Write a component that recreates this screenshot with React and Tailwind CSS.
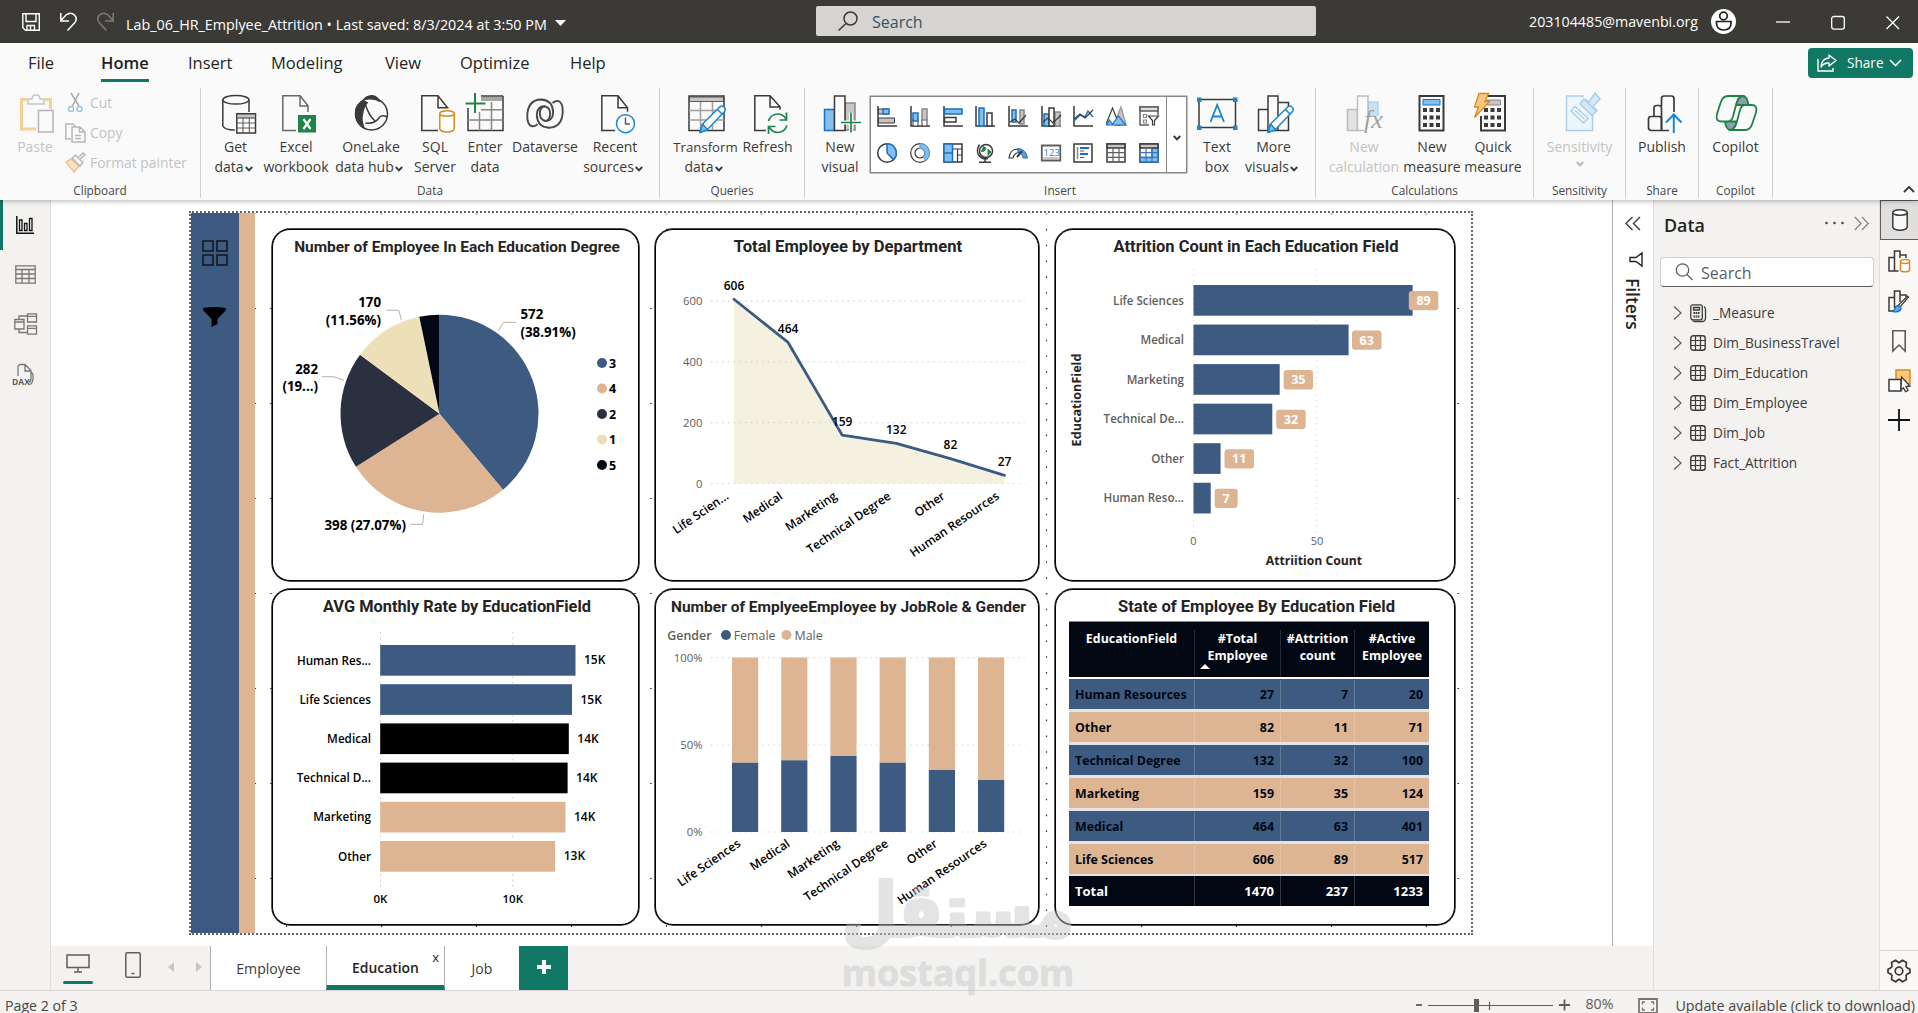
import { Fragment } from 'react'

const BLUE = '#3d5a80'
const TAN = '#deb592'
const INK = '#010813'

const toneFill = { blue: 'bg-[#3d5a80]', tan: 'bg-[#deb592]' }

// ---------- shared bits ----------

function Svg({ w = 40, h = 40, className = '', children }) {
  return (
    <svg
      width={w}
      height={h}
      viewBox={`0 0 ${w} ${h}`}
      fill="none"
      stroke="#3b3a39"
      strokeWidth="1.5"
      className={`shrink-0 overflow-visible ${className}`}
    >
      {children}
    </svg>
  )
}

function Caret({ color = '#3b3a39' }) {
  return (
    <Svg w={8} h={6} className="ml-[1px] mt-[4px]">
      <path d="M.8 1 4 4.4 7.2 1" stroke={color} strokeWidth="1.9" />
    </Svg>
  )
}

// page with a folded corner, used by several ribbon icons
function Doc({ color = '#3b3a39', d = 'M20 36.5H6.8V1.8H24l8 10V18M24 2v10h8' }) {
  return <path d={d} stroke={color} />
}

function Pencil() {
  return (
    <g stroke="#1b86ce" strokeLinejoin="round">
      <path d="M14 38.5 16.5 30 34 12.8q2-1.6 4.2.4 2 2.2.3 4.4L21.5 35.6Z" fill="#fff" />
      <path d="M14 38.5 16.5 30l5 5.6Z" fill="#83bfec" />
      <path d="m31.5 15.5 5 5" />
    </g>
  )
}

const swirl = 'M12.5 30Q10 33 6.500 32 2 30.500 2.300 21 3 6 16 5.500 27.500 6 28.200 18 28 27 20.500 27 15 26 14.800 19.500 15 12.500 20 12.200'

// ---------- ribbon icons ----------

const icons = {
  paste: (
    <g transform="translate(3 0)">
      <path d="M9 5.5H3.5V35H18M27 5.5h5.500V15" stroke="#f3cf9a" strokeWidth="3" />
      <path d="M10 10V5h4q0-4 4-4t4 4h4v5Z" stroke="#c4c4c4" fill="#fafafa" />
      <path d="M20.500 16.500h14.500V38h-14.500Z" stroke="#b5b5b5" fill="#fafafa" />
    </g>
  ),
  getData: (
    <>
      <path d="M6.800 5.800V32q2 4 12 4M33 5.800V18" />
      <ellipse cx="19.900" cy="5.800" rx="13.100" ry="4.300" />
      <path d="M20.800 19.800h18.700V39H20.800Z" fill="#fff" />
      <path d="M20.800 20h18.700v4H20.800Z" fill="#c8c6c4" strokeWidth="1" />
      <path d="M21 29h18M21 34h18M27 24v15M33.300 24v15" strokeWidth="1.100" stroke="#605e5c" />
    </>
  ),
  excel: (
    <>
      <Doc color="#6a6866" />
      <path d="M22 21h18v17.500H22Z" fill="#1e8449" stroke="none" />
      <path d="m27.500 25 7 10M34.500 25l-7 10" stroke="#fff" strokeWidth="2.200" />
    </>
  ),
  oneLake: (
    <>
      <circle cx="20.500" cy="20" r="16" />
      <path d="M12.500 6Q2 11 4.300 23q2 8.500 10 12.500-4-9-2-16 1-7 5-11Z" fill="#3b3a39" stroke="none" />
      <path d="M11 7q3.500-6.500 10.500-6 6.500 1 8 7.500Q22 3.500 11 7Z" fill="#3b3a39" stroke="none" />
      <path d="M14 9q3 11.500 10 18M14.500 29q9 1 13-4.500 3-4.500 8.500-1.500" />
    </>
  ),
  sql: (
    <>
      <Doc d="M23 36.500H6.800V1.800H23l9.500 12H23V2" />
      <path d="M24.800 19.500V35q1 3 7.200 3t7.200-3V19.500" fill="#fff" stroke="#d68b1d" />
      <ellipse cx="32" cy="19.500" rx="7.200" ry="2.800" fill="#fff" stroke="#d68b1d" />
    </>
  ),
  enterData: (
    <>
      <path d="M38 2v34.500H3V14" />
      <path d="M16 3h21v4H16Z" fill="#a8a6a4" stroke="none" />
      <path d="M16 2h22" />
      <path d="M16 15.800h22M3 26h35M14.500 18v18.500M26.500 8v28.500" stroke="#8a8886" />
      <path d="M10-1v20M.5 9.500h20" stroke="#1e8449" strokeWidth="2" />
    </>
  ),
  dataverse: (
    <g strokeWidth="1.900" stroke="#4a4846">
      <path d={swirl} />
      <path d={swirl} transform="rotate(180 20 19.600)" />
    </g>
  ),
  recent: (
    <>
      <Doc d="M20 36.500H6.800V1.800H23l9.500 12v4M23 2v11.800h9.500" />
      <circle cx="30.500" cy="29.700" r="9" fill="#fff" stroke="#1b86ce" />
      <path d="M30.500 23.500v6.500h4.500" stroke="#605e5c" />
    </>
  ),
  transform: (
    <>
      <path d="M3 2h35v34.500H3Z" />
      <path d="M3.500 3h34v4.500h-34Z" fill="#c8c6c4" strokeWidth=".8" />
      <path d="M3 16.500h35M3 26h35M14.500 8v28M26.500 8v28" stroke="#a19f9d" />
      <Pencil />
    </>
  ),
  refresh: (
    <>
      <Doc d="M18 36.500H6.800V1.800H22l10 11v3M22 2v11h10" />
      <g stroke="#1e8449" strokeWidth="1.700">
        <path d="M20.500 27q2.500-7 9.500-7 5 0 8 5M38.500 18.500V26h-7M39 31.500q-2.500 7-9.500 7-5 0-8-5M20.500 40v-7.500h7" />
      </g>
    </>
  ),
  newVisual: (
    <>
      <path d="M25 9h10v27H25Z" fill="#c8c6c4" stroke="#8a8886" />
      <path d="M4.500 15.500h10v21h-10Z" fill="#83bfec" stroke="#1b6ec2" />
      <path d="M14.500 2H25v34.500H14.500Z" fill="#fff" />
      <path d="M21 28.500h20M31 18.500v20" stroke="#fafafa" strokeWidth="4" />
      <path d="M21 28.500h20M31 18.500v20" stroke="#1e8449" strokeWidth="1.700" />
    </>
  ),
  textBox: (
    <>
      <path d="M2 5.500h36.500V33.500H2Z" />
      <g fill="#1b86ce" stroke="none">
        <path d="M0 3.500h4.500V8H0ZM36 3.500h4.500V8H36ZM0 31.500h4.500V36H0ZM36 31.500h4.500V36H36Z" />
      </g>
      <path d="M13.500 28 20.200 11 27 28M16 22.500h8.500" stroke="#1b86ce" strokeWidth="1.800" />
    </>
  ),
  moreVisuals: (
    <>
      <path d="M4.500 15.500h9.500v21H4.500ZM14 2h10v34.500H14ZM24 8.500h10.500v28H24Z" />
      <Pencil />
    </>
  ),
  newCalc: (
    <>
      <path d="M24 8h10v14H24Z" fill="#c7e2f5" stroke="#add4ef" />
      <path d="M3.500 15.500h10v21h-10Z" fill="#e3e3e3" stroke="#bdbdbd" />
      <path d="M13.500 2H24v34.500H13.500Z" fill="#fafafa" stroke="#bdbdbd" />
      <path d="M20 22h18v16H20Z" fill="#fafafa" stroke="none" />
      <text x="20" y="33.500" fill="#a0a0a0" stroke="none" fontSize="26" fontStyle="italic" fontFamily="Liberation Serif, serif">fx</text>
    </>
  ),
  newMeasure: (
    <>
      <path d="M7.500 2h24v34.500h-24Z" strokeWidth="2" />
      <path d="M11 5.500h17v5.500H11Z" fill="#83bfec" stroke="#1b6ec2" strokeWidth="1" />
      <path d="M11 16h17M11 23.500h17M11 31h17" strokeWidth="4" strokeDasharray="4 2.500" />
    </>
  ),
  quickMeasure: (
    <>
      <path d="M14 2h18v34.500H8V22" strokeWidth="2" />
      <path d="M14 6h13.500v5H14Z" fill="#c8c6c4" stroke="#8a8886" strokeWidth="1" />
      <path d="M11 16h17M11 23.500h17M11 31h17" strokeWidth="4" strokeDasharray="4 2.500" />
      <path d="M6-.5h9.500L12 7.500h4.500L1.500 23.500 5.500 13H1.500Z" fill="#fbc77d" stroke="#d68b1d" strokeWidth="1.300" />
    </>
  ),
  sensitivity: (
    <g stroke="#a9cfea">
      <path d="M24 2H6.500v34.500H32.500V19" fill="#eef6fc" />
      <path d="m11 17 4-4.500 13 11.500-4.500 5Z" fill="#fafafa" />
      <path d="m15 16.500 9.500 8.500" />
      <path d="m20 10 4-5 5 3 6-9 5 6-7 7.500 4 4-5 5Z" fill="#d5e9f7" />
      <path d="m24 5 12 12" />
    </g>
  ),
  publish: (
    <>
      <g strokeWidth="1.700">
        <path d="M19.500 36.500V14q0-2.500-2.500-2.500h-2.500Q12 11.500 12 14v8.500M19.500 12V4.500Q19.500 2 22 2h7.500Q32 2 32 4.500V18" />
        <path d="M6.500 25q0-2.500 2.500-2.500h8q2.500 0 2.500 2.500v11.500h-10q-3 0-3-3ZM19.500 36.500H27" />
      </g>
      <path d="M31.800 39V20.500M24 28.500l7.800-8 7.700 8" stroke="#1b86ce" strokeWidth="2" />
    </>
  ),
  copilot: (
    <g stroke="#1d8348" strokeWidth="1.800" strokeLinejoin="round">
      <path d="M20 11q2-9 7-9 4 0 5.500 9Z" fill="#8f9fa8" />
      <path d="M9 27.500q1 8.500 5.500 8.500 3.500 0 6.500-8.500Z" fill="#8f9fa8" />
      <path d="M27.500 2H12Q6.500 2 4.500 9L1 20q-2 7.500 4.500 7.500H12q3.500 0 5-5L20.500 9q2-7 7-7Z" fill="#fafafa" />
      <path d="M13.500 36H29q5.500 0 7.500-7L40 18.500Q42 11 35.500 11H29q-3.500 0-5 5l-3.500 13q-2 7-7 7Z" fill="#fafafa" />
    </g>
  ),
}

// 20px visuals in the gallery, row by row
const axis = <path d="M1 0v20h19" />
const gallery = [
  <>{axis}<path d="M1.500 3h10v5h-10ZM1.500 12h16v5h-16Z" fill="#c8c6c4" strokeWidth="1" /><path d="M6 3h6v5H6Z" fill="#83bfec" stroke="#1b6ec2" /></>,
  <>{axis}<path d="M3 13h5v7H3ZM12 13h5v7h-5Z" strokeWidth="1" fill="#fff" /><path d="M3 7h5v8H3Z" fill="#83bfec" stroke="#1b6ec2" /><path d="M12 3h5v11h-5Z" fill="#c8c6c4" stroke="#8a8886" /></>,
  <>{axis}<path d="M1.500 3H19v5H1.500Z" fill="#83bfec" stroke="#1b6ec2" /><path d="M1.500 11.500H13v4.500H1.500Z" fill="#fff" /></>,
  <>{axis}<path d="M4 2h5v18H4Z" fill="#83bfec" stroke="#1b6ec2" /><path d="M12 7h5v13h-5Z" fill="#fff" /></>,
  <>{axis}<path d="M4 4h4v12H4Z" fill="#83bfec" stroke="#1b6ec2" /><path d="M12 4h4v14h-4Z" fill="#c8c6c4" stroke="#8a8886" /><path d="m2 16 5-3 4 4 7-8" strokeWidth="1.200" /></>,
  <>{axis}<path d="M3 8h5v12H3Z" fill="#83bfec" stroke="#1b6ec2" /><path d="M14 6h5v14h-5Z" fill="#c8c6c4" stroke="#8a8886" /><path d="M8 2h5v18H8Z" fill="#fff" /><path d="m2 16 5-4 5 5 8-8" strokeWidth="1.200" /></>,
  <>{axis}<path d="m1 15 6-6 5 2 3-6 5 6" stroke="#1b6ec2" /><path d="m1 13 6-5 5 4 8-8" strokeWidth="1.200" /></>,
  <><path d="m8 19 7-18 5 18Z" fill="#c8c6c4" stroke="#a19f9d" /><path d="m.500 17 6-15 7 17Z" fill="#fff" strokeWidth="1.200" /><path d="m.500 19 3-5 3 4 6-8 7 9Z" fill="#83bfec" stroke="#1b6ec2" strokeWidth="1.200" /></>,
  <><path d="M10 19H1V1h18v8" stroke="#605e5c" /><path d="M1 1h18v4H1Z" fill="#e1dfdd" stroke="#605e5c" /><path d="M4.500 8.500h3v3h-3ZM4.500 14h3v3h-3Z" stroke="#8a8886" strokeWidth="1.200" /><path d="M9.500 10h10l-4 4.500V19h-2v-4.500Z" fill="#fff" strokeWidth="1.200" /></>,
  <><circle cx="10" cy="10" r="9.300" fill="#fff" /><path d="M10 .700A9.300 9.300 0 0 1 16.500 16.600L10 10Z" fill="#83bfec" stroke="#1b6ec2" /></>,
  <><circle cx="10" cy="10" r="9.300" strokeWidth="1.200" /><circle cx="10" cy="10" r="5" strokeWidth="1.200" /><path d="M10 .700A9.300 9.300 0 0 1 15.500 17.500L13 14A5 5 0 0 0 10 5Z" fill="#83bfec" stroke="#5a9fd6" strokeWidth="1" /></>,
  <><path d="M1 1h18v18H1Z" /><path d="M1 1h8.500v18H1Z" fill="#83bfec" stroke="#1b6ec2" /><path d="M1 10h8.500" stroke="#1b6ec2" /><path d="M9.500 6H19M14.500 6v13M14.500 12H19" strokeWidth="1.200" /></>,
  <><circle cx="11" cy="8" r="6.500" /><path d="M8 3.500 11 5 9.500 8 6 8.500M13 6l3 3-3 3.500Z" fill="#1e8449" stroke="#1e8449" strokeWidth="1" /><path d="M4.500 1.500Q.500 8 4 12.500T13 15.500M10 16v3M4 19.300h12" /></>,
  <><path d="M1 15Q2 6 10 6l1 3.500Q6 10 5 15Z" fill="#fff" strokeWidth="1.200" /><path d="M10 5.500q8 .5 9.500 9.500H15q-.5-5-5-5.500Z" fill="#5a9fd6" stroke="#1b6ec2" strokeWidth="1" /><path d="m9 14 5-6" strokeWidth="2" /></>,
  <><path d="M.800 2.500h18.500v15H.800Z" stroke="#605e5c" strokeWidth="1.800" /><path d="M2.500 15h15" stroke="#a19f9d" strokeWidth="1.200" /><text x="2.500" y="12.500" fill="#1b86ce" stroke="none" fontSize="9.500" fontFamily="Open Sans, sans-serif">123</text></>,
  <><path d="M1 1h18v18H1Z" /><path d="M4.500 4v12" stroke="#8a8886" /><path d="M7 5h9M7 11h8" stroke="#1b6ec2" strokeWidth="2.200" /><path d="M7 8h4M7 14.500h4" stroke="#605e5c" strokeWidth="1" /></>,
  <><path d="M1 1h18v18H1Z" fill="#fff" /><path d="M1 1h18v4H1Z" fill="#c8c6c4" /><path d="M1 9.700h18M1 14.300h18M7 5v14M13 5v14" strokeWidth="1.200" stroke="#605e5c" /></>,
  <><path d="M1 1h18v18H1Z" fill="#fff" /><path d="M13 5h6v14H1v-4.500h12Z" fill="#83bfec" stroke="#1b6ec2" /><path d="M1 1h18v4H1Z" fill="#c8c6c4" /><path d="M1 9.700h18M1 14.300h18M7 5v14M13 5v14" strokeWidth="1.200" stroke="#3c78b4" /></>,
]

// ---------- title bar ----------

function TitleBar() {
  return (
    <div className="grid h-[43px] shrink-0 grid-cols-[816px_500px_1fr] items-center bg-[#3b3a37] text-white">
      <div className="flex items-center pl-[22px]">
        <Svg w={18} h={18}>
          <g stroke="#fff" strokeWidth="1.400">
            <path d="M.800.800h16.500v16.500H3.500L.800 14.800ZM4 1v7.500h10V1M5 17v-4.500h7.500V17M8.500 13v4" />
          </g>
        </Svg>
        <Svg w={17} h={19} className="ml-[20px]">
          <path d="M.800 1v8H9M1 8.500 6 3q4.500-3.500 8.500 0 3.500 4 0 8L7.500 18.500" stroke="#fff" />
        </Svg>
        <Svg w={17} h={19} className="ml-[20px]">
          <path d="M16.200 1v8H8M16 8.500 11 3Q6.500-.500 2.500 3-1 7 2.500 11L9.500 18.500" stroke="#7d7c7a" />
        </Svg>
        <span className="ml-[12px] mt-[6px] whitespace-pre text-[14.34px] leading-5">
          Lab_06_HR_Emplyee_Attrition • Last saved: 8/3/2024 at 3:50 PM
        </span>
        <Svg w={11} h={6} className="ml-[8px] mt-[2px]">
          <path d="M0 0h11L5.500 6Z" fill="#fff" stroke="none" />
        </Svg>
      </div>
      <div className="mb-px flex h-[30px] items-center rounded-[2px] bg-[#d5d4d2] pl-[22px] text-[16px] text-[#36545c]">
        <Svg w={20} h={20}>
          <circle cx="12.500" cy="7.500" r="6.500" />
          <path d="m8 12.500-7.500 7" />
        </Svg>
        <span className="ml-[14px] mt-[2px]">Search</span>
      </div>
      <div className="flex items-center justify-end pr-[18px]">
        <span className="text-[14.230px]">203104485@mavenbi.org</span>
        <Svg w={26} h={26} className="ml-[13px]">
          <circle cx="12.500" cy="12.500" r="12.500" fill="#fff" stroke="none" />
          <circle cx="12.500" cy="7" r="3.800" stroke="#222" strokeWidth="1.700" />
          <path d="M5.500 12.500h14.500v1.500q0 7-7.250 7t-7.250-7Z" stroke="#222" strokeWidth="1.700" />
        </Svg>
        <Svg w={14} h={14} className="ml-[39px]"><path d="M0 7h14" stroke="#fff" strokeWidth="1.300" /></Svg>
        <Svg w={14} h={14} className="ml-[41px]"><rect x=".700" y="1.500" width="12.600" height="12.600" rx="2" stroke="#fff" strokeWidth="1.300" /></Svg>
        <Svg w={14} h={14} className="ml-[41px]"><path d="m.500 1.500 12.500 12.500M13 1.500.500 14" stroke="#fff" strokeWidth="1.300" /></Svg>
      </div>
    </div>
  )
}

// ---------- ribbon ----------

const menu = [
  ['File', 'ml-[28px] w-[73px]'],
  ['Home', 'w-[87px] font-semibold text-[#201f1e]'],
  ['Insert', 'w-[83px]'],
  ['Modeling', 'w-[114px]'],
  ['View', 'w-[75px]'],
  ['Optimize', 'w-[110px]'],
  ['Help', 'w-[60px]'],
]

function MenuBar() {
  return (
    <div className="flex h-[45px] shrink-0 text-[16.500px] text-[#252423]">
      {menu.map(([label, cls]) => (
        <div key={label} className={`pt-[7px] ${cls}`}>
          <span className="inline-block leading-[25px]">{label}</span>
          {label === 'Home' && <div className="mt-[3px] h-[3px] w-[48px] bg-[#117865]" />}
        </div>
      ))}
      <button className="ml-auto mr-[5px] mt-[5px] flex h-[30px] w-[105px] items-center rounded-[4px] bg-[#117865] pl-[9px] text-[13.600px] text-white">
        <Svg w={20} h={18}>
          <g stroke="#fff" strokeWidth="1.400">
            <path d="M1 5v12h15v-3" />
            <path d="M12 1l7 5.500-7 5.500V9q-5-.5-8 4 .5-8.500 8-9Z" strokeLinejoin="round" />
          </g>
        </Svg>
        <span className="ml-[10px]">Share</span>
        <Svg w={13} h={8} className="ml-[5px]"><path d="m1 1 5.500 5.500L12 1" stroke="#fff" strokeWidth="1.600" /></Svg>
      </button>
    </div>
  )
}

function RibbonButton({ icon, label, sub, caret, width, muted, labelClass = '' }) {
  return (
    <div className={`flex shrink-0 flex-col items-center whitespace-nowrap text-[14px] leading-5 ${width} ${muted ? 'text-[#c3c3c3]' : 'text-[#3b3a39]'}`}>
      <Svg>{icons[icon]}</Svg>
      <span className={`mt-[3px] ${labelClass}`}>{label}</span>
      <span className={`flex items-center ${caret && sub ? 'mr-[4px]' : ''}`}>
        {sub}
        {caret && <Caret color={muted ? '#b5b5b5' : '#3b3a39'} />}
      </span>
    </div>
  )
}

function Group({ title, width, pad = '', children }) {
  return (
    <div className={`flex h-[110px] shrink-0 flex-col border-r border-[#d2d0ce] ${width}`}>
      <div className={`flex h-[97px] pt-[6px] ${pad}`}>{children}</div>
      <div className="text-center text-[11.800px] leading-4 text-[#484644]">{title}</div>
    </div>
  )
}

function Gallery() {
  return (
    <div className="mt-[2px] flex h-[77px] w-[317px] shrink-0 border border-[#8a8886] bg-white shadow-[0_0_0_0.500px_#8a8886]">
      <div className="grid flex-1 grid-cols-9 grid-rows-2 gap-y-[1px] py-[1px] pr-[1px]">
        {gallery.map((g, i) => (
          <div key={i} className="flex items-center justify-center">
            <Svg w={20} h={20}>{g}</Svg>
          </div>
        ))}
      </div>
      <div className="flex w-[20px] items-center justify-center border-l border-[#8a8886] pt-[6px]">
        <Svg w={8} h={6}><path d="M.800 1 4 4.400 7.200 1" strokeWidth="2" /></Svg>
      </div>
    </div>
  )
}

function Ribbon() {
  return (
    <div className="flex h-[112px] shrink-0">
      <Group title="Clipboard" width="w-[201px]" pad="pl-[12px]">
        <RibbonButton icon="paste" label="Paste" width="w-[46px]" muted />
        <div className="flex flex-col pl-[7px] text-[13.900px] text-[#c3c3c3]">
          <div className="flex h-[30px] items-center -mt-[6px]">
            <Svg w={20} h={22}>
              <path d="M6 1l8 13M14 1 7.500 14" stroke="#a8a8a8" />
              <circle cx="6" cy="17" r="2.500" stroke="#9dc3e2" />
              <circle cx="14.500" cy="17" r="2.500" stroke="#9dc3e2" />
            </Svg>
            <span className="ml-[5px]">Cut</span>
          </div>
          <div className="flex h-[30px] items-center">
            <Svg w={20} h={22}>
              <g stroke="#b8b8b8">
                <path d="M6 17H.800V2H8l3 3" />
                <path d="M7 5h8l5 5v10H7ZM14.500 5v5H20M10 13.500h6M10 16.500h6" fill="#fafafa" />
              </g>
            </Svg>
            <span className="ml-[5px]">Copy</span>
          </div>
          <div className="flex h-[30px] items-center">
            <Svg w={20} h={20}>
              <path d="m1 9 5-3 8 7-5 6Z" fill="#fae3c4" stroke="#efc48c" />
              <path d="m7 5 8 8 3-4-3.500-2.500L20 2l-2-2-5 5-2.500-3Z" fill="#fafafa" stroke="#b8b8b8" />
            </Svg>
            <span className="ml-[5px] whitespace-nowrap">Format painter</span>
          </div>
        </div>
      </Group>
      <Group title="Data" width="w-[459px]" pad="pl-[6px]">
        <RibbonButton icon="getData" label="Get" sub="data" caret width="w-[57px]" />
        <RibbonButton icon="excel" label="Excel" sub="workbook" width="w-[64px]" />
        <RibbonButton icon="oneLake" label="OneLake" sub="data hub" caret width="w-[86px]" />
        <RibbonButton icon="sql" label="SQL" sub="Server" width="w-[42px]" />
        <RibbonButton icon="enterData" label="Enter" sub="data" width="w-[58px]" />
        <RibbonButton icon="dataverse" label="Dataverse" width="w-[62px]" />
        <RibbonButton icon="recent" label="Recent" sub="sources" caret width="w-[78px]" />
      </Group>
      <Group title="Queries" width="w-[145px]" pad="pl-[8px]">
        <RibbonButton icon="transform" label="Transform" sub="data" caret width="w-[75px]" labelClass="text-[13.200px]" />
        <RibbonButton icon="refresh" label="Refresh" width="w-[49px]" />
      </Group>
      <Group title="Insert" width="w-[511px]" pad="pl-[5px]">
        <RibbonButton icon="newVisual" label="New" sub="visual" width="w-[60px]" />
        <Gallery />
        <RibbonButton icon="textBox" label="Text" sub="box" width="w-[60px]" />
        <RibbonButton icon="moreVisuals" label="More" sub="visuals" caret width="w-[53px]" />
      </Group>
      <Group title="Calculations" width="w-[218px]" pad="pl-[9px]">
        <RibbonButton icon="newCalc" label="New" sub="calculation" width="w-[78px]" muted />
        <RibbonButton icon="newMeasure" label="New" sub="measure" width="w-[58px]" />
        <RibbonButton icon="quickMeasure" label="Quick" sub="measure" width="w-[64px]" />
      </Group>
      <Group title="Sensitivity" width="w-[92px]" pad="justify-center">
        <RibbonButton icon="sensitivity" label="Sensitivity" caret width="w-[70px]" muted />
      </Group>
      <Group title="Share" width="w-[73px]" pad="justify-center">
        <RibbonButton icon="publish" label="Publish" width="w-[60px]" />
      </Group>
      <Group title="Copilot" width="w-[74px]" pad="justify-center">
        <RibbonButton icon="copilot" label="Copilot" width="w-[60px]" />
      </Group>
      <Svg w={12} h={7} className="ml-auto mr-[3px] mt-[98px]"><path d="m1 6 5-5 5 5" strokeWidth="1.900" /></Svg>
    </div>
  )
}

// ---------- left view rail ----------

function ViewRail() {
  return (
    <div className="flex w-[51px] shrink-0 flex-col border-r border-[#e1dfdd] bg-[#f3f2f1]">
      <div className="flex h-[50px] items-center border-l-[3px] border-[#117865] pl-[13px]">
        <Svg w={18} h={18}>
          <path d="M.800 0v17.200H18" stroke="#111" />
          <path d="M3.500 4h2.500v10.500H3.500ZM8.500 7.500H11v7H8.500ZM13.500 2.500H16v12h-2.500Z" stroke="#111" strokeWidth="1.300" />
        </Svg>
      </div>
      <div className="flex h-[48px] items-center pl-[15px]">
        <Svg w={21} h={19}>
          <g stroke="#797775"><path d="M.800.800h19.400v17.400H.800ZM.800 4.500h19.400M.800 9h19.400M.800 13.500h19.400M7 4.500v13.500M14 4.500v13.500" strokeWidth="1.300" /></g>
        </Svg>
      </div>
      <div className="flex h-[52px] items-center pl-[14px]">
        <Svg w={23} h={22}>
          <g stroke="#797775" strokeWidth="1.300">
            <path d="M.800 6.500H10v9.500H.800ZM.800 9H10M13.500.800h9V9h-9ZM13.500 3.300h9M13.500 12.800h9v8.400h-9ZM13.500 15.300h9M5 6V3h8.500M5 16v3.500h8.500" />
          </g>
        </Svg>
      </div>
      <div className="flex h-[50px] items-center pl-[12px]">
        <Svg w={24} h={22}>
          <g stroke="#797775" strokeWidth="1.300">
            <path d="M6 12V3q0-2.500 2.500-2.500H13l6 6V15q0 3-2.500 3M13 .500V7h6M19 8q2.500 1.500 2 6 0 5-3 6.500" />
          </g>
          <text x="0" y="21" fill="#605e5c" stroke="none" fontSize="8.500" fontWeight="700" fontFamily="Open Sans, sans-serif">DAX</text>
        </Svg>
      </div>
    </div>
  )
}

// ---------- report visuals ----------

function Card({ title, titleClass, children }) {
  return (
    <section className="flex flex-col overflow-hidden rounded-[18px] border border-black bg-white shadow-[0_0_0_0.700px_#111]">
      <h2 className={`h-[32px] shrink-0 whitespace-nowrap pt-[5px] text-center font-['Roboto'] font-bold leading-6 text-[#252423] ${titleClass}`}>
        {title}
      </h2>
      {children}
    </section>
  )
}

// chart areas share the report's own coordinate system
function Plot({ x, y, w, h, children }) {
  return (
    <svg width={w} height={h} viewBox={`${x} ${y} ${w} ${h}`} className="shrink-0" fontFamily="Open Sans, sans-serif">
      {children}
    </svg>
  )
}

const slices = [
  { key: '3', value: 572, color: BLUE },
  { key: '4', value: 398, color: TAN },
  { key: '2', value: 282, color: '#2a3040' },
  { key: '1', value: 170, color: '#ede0b9' },
  { key: '5', value: 48, color: INK },
]

function slicePath(from, to) {
  const cx = 439.5
  const cy = 413.7
  const r = 99
  const at = (f) => `${(cx + r * Math.sin(f * 2 * Math.PI)).toFixed(2)} ${(cy - r * Math.cos(f * 2 * Math.PI)).toFixed(2)}`
  return `M${cx} ${cy}L${at(from)}A${r} ${r} 0 0 1 ${at(to)}Z`
}

function DegreePie() {
  const total = slices.reduce((s, d) => s + d.value, 0)
  let acc = 0
  return (
    <Plot x={273} y={262} w={364} h={316}>
      {slices.map((s, i) => {
        const from = acc / total
        acc += s.value
        return (
          <Fragment key={s.key}>
            <path d={slicePath(from, acc / total)} fill={s.color} />
            <circle cx="602" cy={363 + i * 25.500} r="5" fill={s.color} />
            <text x="609" y={367.800 + i * 25.500} fontSize="12.500" fontWeight="700">{s.key}</text>
          </Fragment>
        )
      })}
      <g fill="none" stroke="#b3b0ad">
        <path d="M386.400 310.300h12.400l2.500 9.400M498.300 330.700l5.400-8.400H516M322 376.700h11.700l10.300 3.600M410.400 524.300h12.100l1.200-10" />
      </g>
      <g fontSize="13.300" fontWeight="700">
        <text x="381" y="306.700" textAnchor="end">170</text>
        <text x="381" y="324.500" textAnchor="end">(11.56%)</text>
        <text x="520.500" y="318.700">572</text>
        <text x="520.500" y="337">(38.91%)</text>
        <text x="318" y="373.700" textAnchor="end">282</text>
        <text x="318" y="391" textAnchor="end">(19...)</text>
        <text x="324.500" y="529.500">398 (27.07%)</text>
      </g>
    </Plot>
  )
}

const departments = [
  ['Life Scien...', 606],
  ['Medical', 464],
  ['Marketing', 159],
  ['Technical Degree', 132],
  ['Other', 82],
  ['Human Resources', 27],
]

function DepartmentArea() {
  const px = (i) => 734 + i * 54.100
  const py = (v) => 483.500 - v * 0.304
  const line = departments.map(([, v], i) => `${px(i)},${py(v)}`).join(' ')
  return (
    <Plot x={656} y={262} w={382} h={316}>
      <polygon points={`734,483.500 ${line} 1004.500,483.500`} fill="#f5f1e1" />
      {[600, 400, 200, 0].map((v) => (
        <Fragment key={v}>
          <path d={`M711 ${py(v)}h314`} stroke="#d2d0ce" strokeWidth="1.200" strokeDasharray="1.200 4.500" />
          <text x="702.500" y={py(v) + 4} textAnchor="end" fontSize="11.300" fill="#605e5c">{v}</text>
        </Fragment>
      ))}
      <polyline points={line} fill="none" stroke={BLUE} strokeWidth="2.800" strokeLinecap="round" strokeLinejoin="round" />
      {departments.map(([name, v], i) => (
        <Fragment key={name}>
          <text x={px(i)} y={py(v) - 9.300} textAnchor="middle" fontSize="12" fontWeight="600">{v}</text>
          <text textAnchor="end" fontSize="12" fontWeight="600" transform={`translate(${px(i) - 4.5} 498) rotate(-34.500)`}>{name}</text>
        </Fragment>
      ))}
    </Plot>
  )
}

const attrition = [
  ['Life Sciences', 89, 1408.800],
  ['Medical', 63, 1352],
  ['Marketing', 35, 1283.600],
  ['Technical De...', 32, 1276.200],
  ['Other', 11, 1224.500],
  ['Human Reso...', 7, 1214.700],
]

function AttritionBars() {
  return (
    <Plot x={1056} y={262} w={398} h={316}>
      <path d="M1193.500 269v264M1316.700 269v264" stroke="#d2d0ce" strokeDasharray="1.200 4.500" />
      <text transform="translate(1081 400) rotate(-90)" textAnchor="middle" fontSize="12.600" fontWeight="700" fill="#252423">EducationField</text>
      {attrition.map(([name, v, lx], i) => {
        const y = 285 + i * 39.550
        const lw = v > 9 ? 29.500 : 23
        return (
          <Fragment key={name}>
            <text x="1184" y={y + 19.500} textAnchor="end" fontSize="11.600" fontWeight="600" fill="#605e5c">{name}</text>
            <rect x="1193.500" y={y} width={v * 2.462} height="30.700" fill={BLUE} />
            <rect x={lx} y={y + 6} width={lw} height="19.300" rx="3" fill={TAN} />
            <text x={lx + lw / 2} y={y + 20.200} textAnchor="middle" fontSize="12.500" fontWeight="700" fill="#fff">{v}</text>
          </Fragment>
        )
      })}
      <text x="1193.500" y="545" textAnchor="middle" fontSize="11" fill="#605e5c">0</text>
      <text x="1317" y="545" textAnchor="middle" fontSize="11" fill="#605e5c">50</text>
      <text x="1314" y="565" textAnchor="middle" fontSize="12.200" fontWeight="700" fill="#252423">Attriition Count</text>
    </Plot>
  )
}

const monthly = [
  ['Human Res...', '15K', 195.300, BLUE],
  ['Life Sciences', '15K', 191.800, BLUE],
  ['Medical', '14K', 188.600, '#000'],
  ['Technical D...', '14K', 187.400, '#000'],
  ['Marketing', '14K', 185.300, TAN],
  ['Other', '13K', 175, TAN],
]

function MonthlyBars() {
  return (
    <Plot x={273} y={622} w={364} h={300}>
      <path d="M380.500 632v257M512.800 632v257" stroke="#d2d0ce" strokeDasharray="2 3.500" />
      {monthly.map(([name, label, w, color], i) => {
        const y = 645 + i * 39.200
        return (
          <Fragment key={name}>
            <text x="371" y={y + 19.500} textAnchor="end" fontSize="11.700" fontWeight="600">{name}</text>
            <rect x="380.200" y={y} width={w} height="30.700" fill={color} />
            <text x={380.200 + w + 8.500} y={y + 19.300} fontSize="12" fontWeight="600">{label}</text>
          </Fragment>
        )
      })}
      <text x="380.500" y="902.700" textAnchor="middle" fontSize="11.500" fontWeight="600">0K</text>
      <text x="512.800" y="902.700" textAnchor="middle" fontSize="11.500" fontWeight="600">10K</text>
    </Plot>
  )
}

const genders = [
  ['Life Sciences', 762.700],
  ['Medical', 760.300],
  ['Marketing', 756],
  ['Technical Degree', 762.700],
  ['Other', 770],
  ['Human Resources', 780],
]

function GenderColumns() {
  return (
    <Plot x={656} y={622} w={382} h={300}>
      <g fontSize="12.400" fill="#605e5c">
        <text x="667.300" y="640" fontWeight="600">Gender</text>
        <circle cx="726" cy="635" r="5" fill={BLUE} />
        <text x="733.700" y="640">Female</text>
        <circle cx="786.500" cy="635" r="5" fill={TAN} />
        <text x="794.500" y="640">Male</text>
      </g>
      {[['100%', 657.700], ['50%', 745], ['0%', 832]].map(([t, y]) => (
        <Fragment key={t}>
          <path d={`M711 ${y}h314`} stroke="#d2d0ce" strokeWidth="1.200" strokeDasharray="1.200 4.500" />
          <text x="702.500" y={y + 4} textAnchor="end" fontSize="11.300" fill="#605e5c">{t}</text>
        </Fragment>
      ))}
      {genders.map(([name, split], i) => {
        const x = 732 + i * 49.200
        return (
          <Fragment key={name}>
            <rect x={x} y="657.500" width="26.200" height={split - 657.500} fill={TAN} />
            <rect x={x} y={split} width="26.200" height={832 - split} fill={BLUE} />
            <text textAnchor="end" fontSize="12" fontWeight="600" transform={`translate(${x + 9.5} 845.500) rotate(-34.500)`}>{name}</text>
          </Fragment>
        )
      })}
    </Plot>
  )
}

const tableRows = [
  ['Human Resources', 27, 7, 20],
  ['Other', 82, 11, 71],
  ['Technical Degree', 132, 32, 100],
  ['Marketing', 159, 35, 124],
  ['Medical', 464, 63, 401],
  ['Life Sciences', 606, 89, 517],
]

function Row({ cells, className }) {
  return (
    <div className={`grid grid-cols-[125px_86px_74px_75px] items-center ${className}`}>
      {cells.map((c, i) => (
        <span
          key={i}
          className={`flex h-full items-center ${i === 0 ? 'pl-[6px]' : 'justify-end border-l border-white/20 pr-[6px]'}`}
        >
          {c}
        </span>
      ))}
    </div>
  )
}

function StateTable() {
  return (
    <div className="-mt-px ml-[13px] flex w-[360px] flex-col bg-[#e4e4e4] text-[12.400px] font-bold leading-[17px] text-[#010813]">
      <div className="grid h-[56px] grid-cols-[125px_86px_74px_75px] border-t border-[#8a8886] bg-[#010813] pt-[8px] text-center text-white">
        <span>EducationField</span>
        <span className="relative border-l border-white/15">
          #Total<br />Employee
          <svg width="10" height="5" className="absolute left-[5px] top-[34px]"><path d="M0 5 5 0l5 5Z" fill="#fff" /></svg>
        </span>
        <span className="border-l border-white/15">#Attrition<br />count</span>
        <span className="border-l border-white/15">#Active<br />Employee</span>
      </div>
      <div className="h-[2px] bg-white" />
      <div className="flex flex-col gap-[3px]">
        {tableRows.map((r, i) => (
          <Row key={r[0]} cells={r} className={`h-[30px] pt-px ${i % 2 ? toneFill.tan : toneFill.blue}`} />
        ))}
      </div>
      <Row cells={['Total', 1470, 237, 1233]} className="mt-[2px] h-[30px] bg-[#010813] text-[13px] text-white" />
    </div>
  )
}

function ReportPage() {
  return (
    <div className="relative ml-[138px] mt-[11px] flex h-[724px] w-[1284px] border-2 border-dotted border-[#666]">
      {/* snap grid shows only in the gutters */}
      <svg className="absolute inset-0" width="1280" height="720">
        <g stroke="#333" strokeWidth="1.200" strokeDasharray="1.600 14.230">
          {[95, 190, 285, 380, 475, 570, 665, 760, 855, 950, 1045, 1140, 1235].map((x) => <path key={x} d={`M${x + 0.500} 0v720`} />)}
          {[95, 190, 285, 380, 475, 570, 665].map((y) => <path key={y} d={`M0 ${y + 0.500}h1279`} />)}
          <path d="M0 .500h1279" stroke="#c8c6c4" />
        </g>
      </svg>
      <div className="relative flex h-full w-[48px] flex-col bg-[#3d5a80]">
        <Svg w={26} h={26} className="ml-[11px] mt-[27px]">
          <path d="M1 1h10v10H1ZM15 1h10v10H15ZM1 15h10v10H1ZM15 15h10v10H15Z" stroke="#10151d" />
        </Svg>
        <Svg w={23} h={20} className="ml-[12px] mt-[41px]">
          <path d="M0 1Q11.500-1 23 1v2l-8.500 9v5l-6 3v-8L0 3Z" fill="#000" stroke="none" />
        </Svg>
      </div>
      <div className="relative w-[16px] bg-[#deb592]" />
      <div className="relative grid grid-cols-[367px_384px_400px] grid-rows-[352px_336px] gap-x-[16px] gap-y-[8px] pl-[17px] pt-[16px]">
        <Card title="Number of Employee In Each Education Degree" titleClass="text-[15.450px] pl-[3px]"><DegreePie /></Card>
        <Card title="Total Employee by Department" titleClass="text-[16.600px] pl-[2px]"><DepartmentArea /></Card>
        <Card title="Attrition Count in Each Education Field" titleClass="text-[16.500px] pl-[2px]"><AttritionBars /></Card>
        <Card title="AVG Monthly Rate by EducationField" titleClass="text-[16.360px] pl-[3px]"><MonthlyBars /></Card>
        <Card title="Number of EmplyeeEmployee by JobRole & Gender" titleClass="text-[15.500px] pl-[3px]"><GenderColumns /></Card>
        <Card title="State of Employee By Education Field" titleClass="text-[16.580px] pl-[3px]"><StateTable /></Card>
      </div>
    </div>
  )
}

// ---------- page tabs and status ----------

function PageTabs() {
  return (
    <div className="flex h-[44px] shrink-0 bg-[#f3f2f1] text-[14.100px] text-[#3b3a39]">
      <div className="ml-[12px] flex w-[30px] flex-col items-center justify-end pb-[6px]">
        <Svg w={24} h={19} className="mb-[8px]">
          <path d="M1 1h22v12.500H1ZM12 13.500V18M8 18h8" stroke="#605e5c" />
        </Svg>
        <div className="h-[3px] w-full rounded bg-[#117865]" />
      </div>
      <Svg w={16} h={26} className="ml-[32px] mt-[6px]">
        <rect x=".800" y=".800" width="14.400" height="24.400" rx="1.500" stroke="#605e5c" />
        <path d="M6.500 21.500h3" stroke="#605e5c" />
      </Svg>
      <Svg w={6} h={10} className="ml-[27px] mt-[16px]"><path d="M6 0v10L0 5Z" fill="#c8c6c4" stroke="none" /></Svg>
      <Svg w={6} h={10} className="ml-[22px] mt-[16px]"><path d="M0 0v10l6-5Z" fill="#c8c6c4" stroke="none" /></Svg>
      <div className="ml-[8px] flex w-[116px] items-center justify-center border-l border-[#b3b0ad] bg-white pt-px">Employee</div>
      <div className="relative flex w-[119px] items-center justify-center border-x border-b-[5px] border-x-[#b3b0ad] border-b-[#117865] bg-white pt-[6px] text-[13.900px] font-semibold text-[#252423]">
        Education
        <span className="absolute right-[5px] top-[3px] text-[13px] font-normal leading-4">x</span>
      </div>
      <div className="flex w-[74px] items-center justify-center bg-white pt-px">Job</div>
      <div className="flex w-[49px] items-center justify-center bg-[#117865] pb-[3px]">
        <Svg w={14} h={14}><path d="M7 0v14M0 7h14" stroke="#fff" strokeWidth="4" /></Svg>
      </div>
    </div>
  )
}

function StatusBar() {
  return (
    <div className="flex h-[23px] shrink-0 overflow-hidden border-t border-[#d8d6d4] bg-[#f3f2f1] text-[14.200px] leading-5 text-[#484644]">
      <span className="ml-[5px] mt-[5px]">Page 2 of 3</span>
      <Svg w={154} h={16} className="ml-auto mt-[7px]">
        <g stroke="#605e5c">
          <path d="M0 7h6" strokeWidth="1.800" />
          <path d="M12 7.500h125M73.500 4v8" strokeWidth="1.200" />
          <path d="M60.500 1v13" strokeWidth="5" />
          <path d="M143 7h11M148.500 1.500v11" strokeWidth="1.800" />
        </g>
      </Svg>
      <span className="ml-[15px] mt-[3px] w-[53px] text-[#605e5c]">80%</span>
      <Svg w={20} h={16} className="mt-[7px]">
        <path d="M1 1h18v14H1Z" stroke="#797775" strokeWidth="1.800" />
        <path d="M4.500 6.500V4H7M13 4h2.500v2.500M4.500 9.500V12H7M13 12h2.500V9.500" stroke="#797775" strokeWidth="1.300" />
      </Svg>
      <span className="ml-[17px] mr-[3px] mt-[5px] whitespace-nowrap text-[14.330px]">Update available (click to download)</span>
    </div>
  )
}

// ---------- right side ----------

function FiltersPane() {
  return (
    <div className="flex w-[41px] shrink-0 flex-col items-center bg-white">
      <div className="flex w-full flex-1 flex-col items-center border-l border-[#b3b0ad]">
        <Svg w={16} h={15} className="mt-[16px]"><path d="M7.500 1 1 7.500 7.500 14M15 1 8.500 7.500 15 14" strokeWidth="1.400" /></Svg>
        <Svg w={14} h={15} className="ml-[6px] mt-[21px]"><path d="M13 1v13L7 9.500H1v-4h6Z" stroke="#222" strokeWidth="1.400" /></Svg>
        <span className="mt-[11px] text-[17.400px] font-semibold leading-5 text-[#252423] [writing-mode:vertical-rl]">Filters</span>
      </div>
    </div>
  )
}

const tables = ['_Measure', 'Dim_BusinessTravel', 'Dim_Education', 'Dim_Employee', 'Dim_Job', 'Fact_Attrition']

function DataPane() {
  return (
    <div className="flex w-[226px] shrink-0 flex-col border-l border-[#e1dfdd] bg-[#f3f2f1] text-[13.650px] text-[#3b3a39]">
      <div className="mt-[12px] flex h-[26px] items-center pl-[10px] pr-[10px]">
        <span className="text-[17.900px] font-semibold text-[#252423]">Data</span>
        <Svg w={19} h={4} className="ml-auto mb-[4px]">
          <g fill="#3b3a39" stroke="none"><circle cx="1.500" cy="2" r="1.200" /><circle cx="9.500" cy="2" r="1.200" /><circle cx="17.500" cy="2" r="1.200" /></g>
        </Svg>
        <Svg w={15} h={15} className="ml-[10px] mb-[3px]"><path d="M.800 1 7 7.500.800 14M8 1l6.200 6.500L8 14" stroke="#8a8178" strokeWidth="1.200" /></Svg>
      </div>
      <div className="ml-[6px] mt-[19px] flex h-[30px] w-[214px] items-center rounded-[4px] border border-[#d2d0ce] border-b-[#605e5c] bg-white pl-[14px] text-[16px] text-[#605e5c]">
        <Svg w={18} h={18}><circle cx="7.500" cy="7" r="6.200" stroke="#605e5c" strokeWidth="1.300" /><path d="m12 11.500 5.500 5.500" stroke="#605e5c" strokeWidth="1.300" /></Svg>
        <span className="ml-[8px] mt-[2px]">Search</span>
      </div>
      <div className="mt-[11px]">
        {tables.map((name, i) => (
          <div key={name} className="flex h-[30px] items-center pl-[19px]">
            <Svg w={9} h={14}><path d="m1 .500 7 6.500-7 6.500" stroke="#605e5c" strokeWidth="1.200" /></Svg>
            {i === 0 ? (
              <Svg w={16} h={18} className="ml-[8px]">
                <g strokeWidth="1.300">
                  <rect x=".800" y=".800" width="11.500" height="15" rx="2" />
                  <path d="M3.500 3.500h6v2.500h-6ZM14 2.500q1.500 1 1.500 3V14q0 3.500-3.500 3.500H5q-2 0-2.500-1" />
                  <path d="M3.500 9h6M3.500 12.500h6" strokeWidth="1.800" strokeDasharray="1.600 .600" />
                </g>
              </Svg>
            ) : (
              <Svg w={16} h={16} className="ml-[8px]">
                <rect x=".800" y=".800" width="14.400" height="14.400" rx="2.500" strokeWidth="1.400" />
                <path d="M5.500 1v14M10.500 1v14M1 5.500h14M1 10.500h14" strokeWidth="1.200" />
              </Svg>
            )}
            <span className="ml-[7px] mt-px whitespace-nowrap">{name}</span>
          </div>
        ))}
      </div>
    </div>
  )
}

function PaneRail() {
  return (
    <div className="flex w-[39px] shrink-0 flex-col items-center border-l border-[#e1dfdd] bg-[#faf9f8]">
      <div className="flex h-[40px] w-full items-center justify-center border border-r-0 border-[#605e5c] bg-[#e1dfdd]">
        <Svg w={16} h={22}>
          <path d="M.800 3.500V18q1 3.200 7.200 3.200t7.200-3.200V3.500" fill="#f8f8f8" />
          <ellipse cx="8" cy="3.500" rx="7.200" ry="2.800" fill="#fff" />
        </Svg>
      </div>
      <Svg w={22} h={22} className="mt-[10px]">
        <path d="M1 7.500h5.500V21H1ZM6.500 21V1H12v7M12 5h6v3M6.500 21h4" />
        <path d="M12.500 11.500V20q.5 1.800 4.500 1.800t4.500-1.800v-8.500" stroke="#d68b1d" fill="#fff" />
        <ellipse cx="17" cy="11.500" rx="4.500" ry="2" stroke="#d68b1d" fill="#fff" />
      </Svg>
      <Svg w={22} h={22} className="mt-[18px]">
        <path d="M6 21H1V7.500h5.500V18M6.500 8V1H12v11M12 5h6v2" />
        <path d="M20.500 7 12 17l-2-1.500L19.500 6Z" fill="#fff" strokeWidth="1.200" />
        <path d="M11.500 16q-4-1-4.500 2.500-.5 2-3 3 6 1.500 8.500-1.500 1.500-2-1-4Z" fill="#5aa9e6" stroke="#1b6ec2" strokeWidth="1.200" />
      </Svg>
      <Svg w={14} h={22} className="mt-[18px]"><path d="M.800.800h12.400V21L7 15 .800 21Z" stroke="#605e5c" strokeWidth="1.600" /></Svg>
      <Svg w={23} h={23} className="mt-[17px]">
        <path d="M8 1h14v14H8Z" fill="#fbc77d" stroke="#d68b1d" />
        <path d="M1 10.500h12v11.500H1Z" fill="#fff" />
        <path d="m13.500 8 8.500 9-4 .500 2 4-2.500 1.200-2-4-2.500 2.300Z" fill="#fff" strokeWidth="1.300" />
      </Svg>
      <Svg w={22} h={22} className="mt-[17px]"><path d="M11 0v22M0 11h22" stroke="#111" strokeWidth="1.800" /></Svg>
      <div className="mt-auto flex h-[40px] w-full items-center justify-center border-t border-[#d8d6d4]">
        <Svg w={24} h={24}>
          <path
            d="M8.500 1.200 12 3.800l3.500-2.600 4 2.300-.5 4.200q.7 1.300 4 2.700v3.200q-3.300 1.300-4 2.700l.5 4.200-4 2.300-3.500-2.600-3.500 2.600-4-2.300.5-4.200q-.7-1.400-4-2.700v-3.200q3.300-1.400 4-2.700l-.5-4.200Z"
            strokeLinejoin="round"
            strokeWidth="1.700"
          />
          <circle cx="12" cy="12" r="3.800" strokeWidth="1.700" />
        </Svg>
      </div>
    </div>
  )
}

function Watermark() {
  return (
    <svg width="256" height="135" className="pointer-events-none absolute left-[830px] top-[870px] overflow-visible opacity-45" fill="#c4c4c4" stroke="#c4c4c4" strokeLinejoin="round">
      <text x="128" y="66" textAnchor="middle" direction="rtl" fontSize="74" fontWeight="700" strokeWidth="4" fontFamily="DejaVu Sans, sans-serif" textLength="232" lengthAdjust="spacingAndGlyphs">
        مستقل
      </text>
      <text x="128" y="115.500" textAnchor="middle" fontSize="35.900" fontWeight="700" strokeWidth=".800" fontFamily="Open Sans, sans-serif">mostaql.com</text>
    </svg>
  )
}

export default function App() {
  return (
    <div className="relative flex h-[1013px] w-[1918px] flex-col overflow-hidden bg-white font-['Open_Sans',sans-serif]">
      <TitleBar />
      <header className="relative z-10 flex shrink-0 flex-col bg-[#fafafa] shadow-[0_1px_5px_rgba(0,0,0,0.300)]">
        <MenuBar />
        <Ribbon />
      </header>
      <div className="flex min-h-0 flex-1">
        <ViewRail />
        <main className="flex min-w-0 flex-1 flex-col">
          <div className="flex min-h-0 flex-1">
            <div className="min-w-0 flex-1 bg-white">
              <ReportPage />
            </div>
            <FiltersPane />
          </div>
          <PageTabs />
        </main>
        <DataPane />
        <PaneRail />
      </div>
      <StatusBar />
      <Watermark />
    </div>
  )
}
